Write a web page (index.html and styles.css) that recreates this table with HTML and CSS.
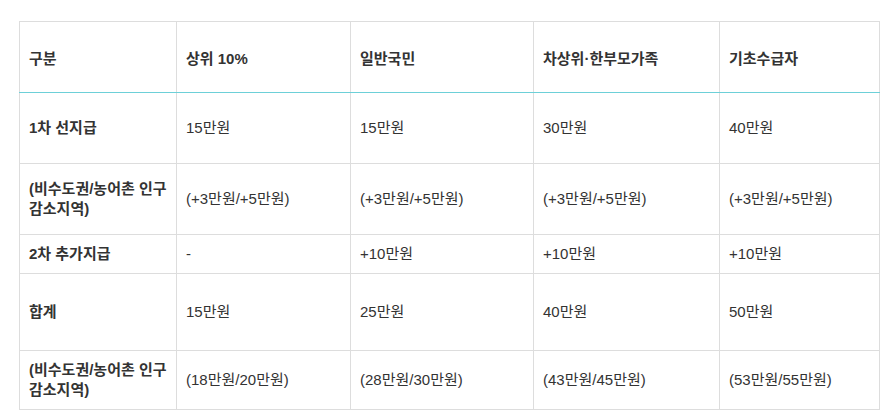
FILE: index.html
```html
<!DOCTYPE html>
<html lang="ko">
<head>
<meta charset="utf-8">
<link rel="stylesheet" href="styles.css">
</head>
<body>
<div class="wrap">
<table class="grid">
  <colgroup>
    <col class="c1"><col class="c2"><col class="c3"><col class="c4"><col class="c5">
  </colgroup>
  <thead>
    <tr class="h71">
      <th>구분</th><th>상위 10%</th><th>일반국민</th><th>차상위·한부모가족</th><th>기초수급자</th>
    </tr>
  </thead>
  <tbody>
    <tr class="h71">
      <th>1차 선지급</th><td>15만원</td><td>15만원</td><td>30만원</td><td>40만원</td>
    </tr>
    <tr class="h71">
      <th>(비수도권/농어촌 인구 감소지역)</th><td>(+3만원/+5만원)</td><td>(+3만원/+5만원)</td><td>(+3만원/+5만원)</td><td>(+3만원/+5만원)</td>
    </tr>
    <tr>
      <th>2차 추가지급</th><td>-</td><td>+10만원</td><td>+10만원</td><td>+10만원</td>
    </tr>
    <tr class="h77">
      <th>합계</th><td>15만원</td><td>25만원</td><td>40만원</td><td>50만원</td>
    </tr>
    <tr>
      <th>(비수도권/농어촌 인구 감소지역)</th><td>(18만원/20만원)</td><td>(28만원/30만원)</td><td>(43만원/45만원)</td><td>(53만원/55만원)</td>
    </tr>
  </tbody>
</table>
</div>
</body>
</html>
```

FILE: styles.css
```css
html, body {
  margin: 0;
  padding: 0;
  background: #ffffff;
}
.wrap {
  padding: 21px 0 0 19px;
}
.grid {
  border-collapse: collapse;
  table-layout: fixed;
  width: 860px;
  font-family: "Liberation Sans", "Noto Sans CJK KR", sans-serif;
  font-size: 15px;
  line-height: 20px;
  color: #333333;
}
.c1 { width: 157px; }
.c2 { width: 174px; }
.c3 { width: 183px; }
.c4 { width: 186px; }
.c5 { width: 160px; }
.grid th, .grid td {
  border: 1px solid #dddddd;
  padding: 9px 4px 9px 9px;
  text-align: left;
  vertical-align: middle;
}
.grid th {
  font-weight: bold;
}
.grid td {
  font-weight: normal;
}
.grid thead th {
  border-bottom: 1px solid #6dd0d8;
  padding-top: 13px;
}
.h71 { height: 71px; }
.h77 { height: 77px; }
```
